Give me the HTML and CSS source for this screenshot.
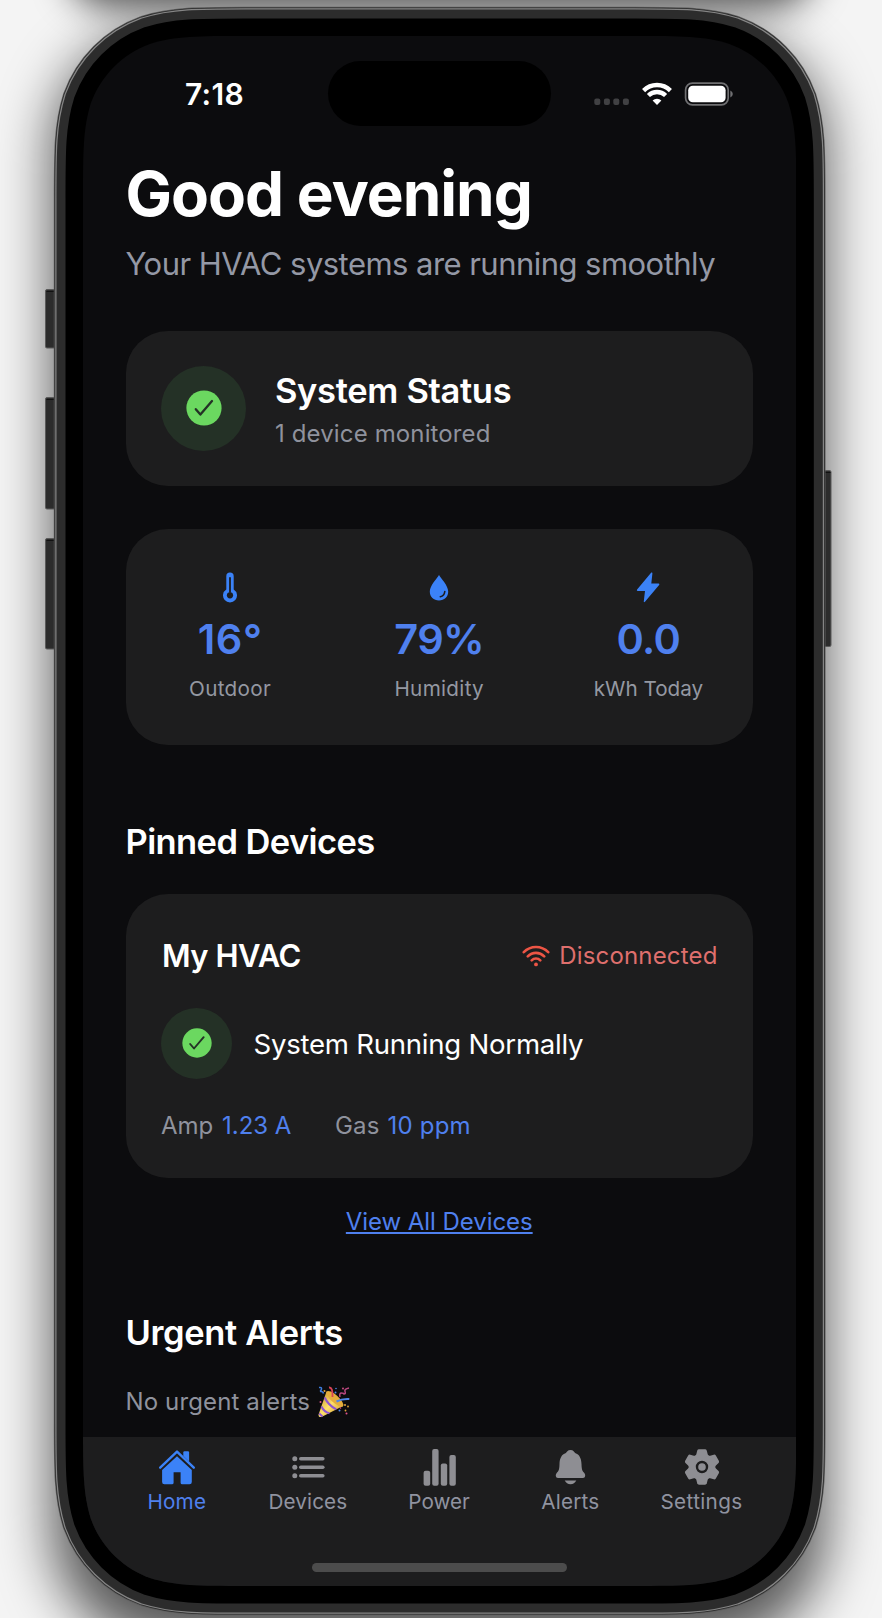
FILE: index.html
```html
<!DOCTYPE html>
<html lang="en">
<head>
<meta charset="utf-8">
<title>HVAC Home</title>
<link rel="stylesheet" href="styles.css">
</head>
<body>
<div class="stage">
  <div class="shadow"></div>
  <div class="shadow-top"></div>
  <svg class="frame" width="882" height="1618" viewBox="0 0 882 1618" aria-hidden="true">
    <defs>
      <path id="body" d="M162 0H551.3C597.9 0 621.2 0 646.4 7.9C673.8 17.9 695.4 39.5 705.4 66.9C713.3 92.1 713.3 115.4 713.3 162V1388C713.3 1434.6 713.3 1457.9 705.4 1483.1C695.4 1510.5 673.8 1532.1 646.4 1542.1C621.2 1550 597.9 1550 551.3 1550H162C115.4 1550 92.1 1550 66.9 1542.1C39.5 1532.1 17.9 1510.5 7.9 1483.1C0 1457.9 0 1434.6 0 1388V162C0 115.4 0 92.1 7.9 66.9C17.9 39.5 39.5 17.9 66.9 7.9C92.1 0 115.4 0 162 0Z"/>
    </defs>
    <g fill="#2c2c2c" stroke="#5a5a5a" stroke-width="1">
      <rect x="45.5" y="289.5" width="14" height="58.5" rx="1.5"/>
      <rect x="45.5" y="397.5" width="14" height="111.5" rx="1.5"/>
      <rect x="45.5" y="538.5" width="14" height="110.5" rx="1.5"/>
      <rect x="818" y="470.5" width="13" height="176" rx="1.5"/>
    </g>
    <path d="M46.500 291.500H54M46.500 399.500H54M46.500 540.500H54M824 472.500H830.500" stroke="#111" stroke-width="1.200"/>
    <g transform="translate(83 36)">
      <use href="#body" stroke="#5c5c5c" stroke-width="58.400"/>
      <use href="#body" stroke="#2a2a2a" stroke-width="57"/>
      <use href="#body" stroke="#858585" stroke-width="55.500"/>
      <use href="#body" stroke="#2c2c2c" stroke-width="53"/>
      <use href="#body" stroke="#000" stroke-width="35"/>
    </g>
  </svg>

  <div class="screen">
    <div class="status-bar">
      <div class="time">7:18</div>
      <div class="island"></div>
      <div class="indicators">
        <svg width="140" height="24" viewBox="0 0 140 24">
          <g fill="#414143"><rect x=".3" y="16.500" width="6" height="6.500" rx="2"/><rect x="9.900" y="16.500" width="6" height="6.500" rx="2"/><rect x="19.300" y="16.500" width="6" height="6.500" rx="2"/><rect x="28.900" y="16.500" width="6" height="6.500" rx="2"/></g>
          <g fill="none" stroke="#fff" stroke-width="4.400">
            <path d="M49.600 8.600A19 19 0 0 1 76.400 8.600"/>
            <path d="M54.400 13.500A12.300 12.300 0 0 1 71.600 13.500"/>
          </g>
          <path d="M63 23L58.600 18.500A6.400 6.400 0 0 1 67.400 18.500Z" fill="#fff"/>
          <rect x="91.600" y="1.200" width="42.600" height="21.600" rx="6.800" fill="none" stroke="#707072" stroke-width="1.700"/>
          <rect x="94.200" y="3.700" width="37.400" height="16.600" rx="4.600" fill="#fff"/>
          <path d="M136.300 8.500Q138.800 9.500 138.800 12T136.300 15.500Z" fill="#707072"/>
        </svg>
      </div>
    </div>

    <main class="content">
      <h1 class="greeting">Good evening</h1>
      <p class="subtitle">Your HVAC systems are running smoothly</p>

      <section class="card status-card">
        <div class="badge badge-large">
          <svg width="36" height="36" viewBox="0 0 36 36"><circle cx="18" cy="18" r="17.600" fill="#6bd860"/><path d="M9.800 19.200L14.400 24.600L26 11" fill="none" stroke="#243126" stroke-width="2.300" stroke-linecap="round" stroke-linejoin="round"/></svg>
        </div>
        <div class="status-text">
          <h2 class="heading status-title">System Status</h2>
          <p class="note monitored">1 device monitored</p>
        </div>
      </section>

      <section class="card metrics">
        <div class="metric">
          <svg width="30" height="31" viewBox="0 0 30 31"><path d="M11.300 4.200a3.700 3.700 0 0 1 7.400 0V17.500a7 7 0 1 1-7.400 0Z" fill="#3b82f7"/><path d="M15 6V20" stroke="#1d1d1e" stroke-width="1.800" stroke-linecap="round"/><circle cx="15" cy="23.300" r="3.100" fill="#1d1d1e"/></svg>
          <div class="value outdoor">16°</div>
          <div class="label outdoor-label">Outdoor</div>
        </div>
        <div class="metric">
          <svg width="30" height="31" viewBox="0 0 30 31"><path d="M15 3C17 6.500 24.200 13.500 24.200 19.600C24.200 25 20.300 28.500 15 28.500S5.800 25 5.800 19.600C5.800 13.500 13 6.500 15 3Z" fill="#3b82f7"/><path d="M20.800 19.500Q20.300 24 16.300 24.700" fill="none" stroke="#1d1d1e" stroke-width="1.600" stroke-linecap="round"/></svg>
          <div class="value humidity">79%</div>
          <div class="label humidity-label">Humidity</div>
        </div>
        <div class="metric">
          <svg width="30" height="31" viewBox="0 0 30 31"><path d="M18.300 .6Q19.500 0 19.400 1.400L18.300 11.500H25.600Q27 11.800 26.100 13.100L12 29.800Q10.600 31 10.800 29.200L12 18.900H4.600Q3.300 18.600 4.100 17.400Z" fill="#3b82f7"/></svg>
          <div class="value energy">0.0</div>
          <div class="label energy-label">kWh Today</div>
        </div>
      </section>

      <h2 class="heading section-title pinned">Pinned Devices</h2>

      <section class="card device">
        <div class="device-head">
          <h3 class="device-name">My HVAC</h3>
          <div class="connection">
            <svg width="28" height="22" viewBox="0 0 28 22" fill="none" stroke="#ed5545" stroke-width="2.600" stroke-linecap="round"><path d="M1.800 7.200A17 17 0 0 1 26.200 7.200M5.800 11.400A11.400 11.400 0 0 1 22.200 11.400M9.700 15.300A6 6 0 0 1 18.300 15.300"/><circle cx="14" cy="19.400" r="1.900" fill="#ed5545" stroke="none"/></svg>
            <span class="disconnected">Disconnected</span>
          </div>
        </div>
        <div class="device-state">
          <div class="badge badge-small">
            <svg width="30" height="30" viewBox="0 0 36 36"><circle cx="18" cy="18" r="17.600" fill="#6bd860"/><path d="M9.800 19.200L14.400 24.600L26 11" fill="none" stroke="#243126" stroke-width="2.300" stroke-linecap="round" stroke-linejoin="round"/></svg>
          </div>
          <span class="state-text">System Running Normally</span>
        </div>
        <div class="readings">
          <div class="reading amp"><span>Amp</span><span class="reading-value">1.23 A</span></div>
          <div class="reading gas"><span>Gas</span><span class="reading-value">10 ppm</span></div>
        </div>
      </section>

      <a class="view-all">View All Devices</a>

      <h2 class="heading section-title urgent">Urgent Alerts</h2>
      <div class="note empty">
        <span>No urgent alerts</span>
        <svg width="32" height="32" viewBox="0 0 32 32">
          <defs><linearGradient id="cone" x1="0" y1="0" x2="1" y2="1"><stop offset="0" stop-color="#b8862b"/><stop offset=".5" stop-color="#ffe06a"/><stop offset="1" stop-color="#c78d28"/></linearGradient></defs>
          <path d="M8.500 5.500L.6 28.500Q.3 31.600 3.500 31L25 20Q23 11 8.500 5.500Z" fill="url(#cone)"/>
          <ellipse cx="16.800" cy="12.800" rx="11" ry="3.800" transform="rotate(42 16.800 12.800)" fill="#e5ad3c"/>
          <path d="M6.700 11.500Q10 19 18.300 23.400M3.500 20.500Q6 26 11.500 27.300M1.200 27.500L4.500 30.500" fill="none" stroke="#8d55cf" stroke-width="2"/>
          <path d="M18.500 15.500Q24 12.500 31.300 13" fill="none" stroke="#4e86e8" stroke-width="2"/>
          <path d="M11 1.500Q15 1 14.500 11" fill="none" stroke="#d84355" stroke-width="1.800"/>
          <path d="M1 1.500Q4 1 3.500 3T2 5.500Q5 5 5.500 7.500" fill="none" stroke="#3e7cdc" stroke-width="1.500"/>
          <path d="M22 11Q21 7 23.500 7T26 8Q28 8 27 5.500T31 2" fill="none" stroke="#b8477f" stroke-width="1.500"/>
          <g fill="#e2a43b"><circle cx="6.500" cy="5" r="1"/><circle cx="27" cy="19" r="1"/><circle cx="30" cy="20.500" r=".9"/><circle cx="27.500" cy="24.500" r=".9"/></g>
          <g fill="#e0528c"><circle cx="2.500" cy="16" r="1"/><circle cx="25" cy="2.500" r=".9"/><circle cx="28.500" cy="27.500" r="1"/><circle cx="22.500" cy="22" r=".8"/></g>
          <g fill="#4e86e8"><circle cx="17.500" cy="6.500" r="1"/><circle cx="21.500" cy="24.500" r="1"/><circle cx="18" cy="2.500" r=".8"/></g>
        </svg>
      </div>
    </main>

    <nav class="tab-bar">
      <div class="tabs">
        <div class="tab active">
          <svg width="38" height="38" viewBox="0 0 38 38" fill="#3b82f7"><path d="M2.200 19.700L19 3.600L35.800 19.700" fill="none" stroke="#3b82f7" stroke-width="2.400" stroke-linecap="round" stroke-linejoin="round"/><path d="M25.300 8V4.500Q25.300 3.300 26.500 3.300H30Q31.100 3.300 31.100 4.500V13.500Z"/><path d="M19 8.300L33.800 22V34Q33.800 36.300 31.500 36.300H24.200Q22.600 36.300 22.600 34.800V24.300H15.600V34.800Q15.600 36.300 14 36.300H6.400Q4.100 36.300 4.100 34V22Z"/></svg>
          <span class="tab-home">Home</span>
        </div>
        <div class="tab">
          <svg width="38" height="38" viewBox="0 0 38 38" fill="#8e8e93"><circle cx="5.800" cy="10.700" r="2.500"/><circle cx="5.800" cy="19.200" r="2.500"/><circle cx="5.800" cy="27.700" r="2.500"/><rect x="10" y="8.900" width="25.600" height="3.700" rx="1.800"/><rect x="10" y="17.400" width="25.600" height="3.700" rx="1.800"/><rect x="10" y="25.900" width="25.600" height="3.700" rx="1.800"/></svg>
          <span class="tab-devices">Devices</span>
        </div>
        <div class="tab">
          <svg width="38" height="38" viewBox="0 0 38 38" fill="#8e8e93"><rect x="2.600" y="22.700" width="6.600" height="15" rx="2"/><rect x="11.200" y="1" width="6.400" height="36.700" rx="2"/><rect x="19.800" y="15.400" width="6.400" height="22.300" rx="2"/><rect x="28.400" y="7" width="6.400" height="30.700" rx="2"/></svg>
          <span class="tab-power">Power</span>
        </div>
        <div class="tab">
          <svg width="38" height="38" viewBox="0 0 38 38" fill="#8e8e93"><path d="M18.500 2C21.300 2 22.500 4 23.100 5.100C27.500 6.500 29.300 10.500 29.500 16C29.700 22.500 30.600 23.200 32.300 25C33.700 26.500 33.600 30 31 30H6C3.400 30 3.300 26.500 4.700 25C6.400 23.200 7.300 22.500 7.500 16C7.700 10.500 9.500 6.500 13.900 5.100C14.500 4 15.700 2 18.500 2Z"/><path d="M12.700 32.500H24.300Q22.500 36.200 18.500 36.200T12.700 32.500Z"/></svg>
          <span class="tab-alerts">Alerts</span>
        </div>
        <div class="tab">
          <svg width="38" height="38" viewBox="0 0 38 38"><g fill="#8e8e93"><circle cx="19" cy="19" r="13.400"/><path id="tooth" d="M12.600 9L14.200 2.700Q14.600 1.300 16 1.300H22Q23.400 1.300 23.800 2.700L25.400 9V29L23.800 35.300Q23.400 36.700 22 36.700H16Q14.600 36.700 14.200 35.300L12.600 29Z"/><use href="#tooth" transform="rotate(60 19 19)"/><use href="#tooth" transform="rotate(120 19 19)"/></g><circle cx="19" cy="19" r="5" fill="none" stroke="#1d1d1e" stroke-width="2.400"/></svg>
          <span class="tab-settings">Settings</span>
        </div>
      </div>
      <div class="home-indicator"></div>
    </nav>
  </div>
</div>
</body>
</html>
```
FILE: styles.css
```css
* { box-sizing: border-box; margin: 0; padding: 0; }

body {
  width: 882px;
  height: 1618px;
  overflow: hidden;
  background: #f1f1f1;
  font-family: Inter, "Liberation Sans", sans-serif;
  color: #fff;
}

svg { display: block; flex: none; }

.stage {
  position: relative;
  width: 882px;
  height: 1618px;
  padding: 36px 0 0 83px;
  overflow: hidden;
  background: #f4f4f4;
}

/* Drop shadow of the phone, and the one falling in from above the page */
.shadow {
  position: absolute;
  left: 52px;
  top: 30px;
  width: 774px;
  height: 1618px;
  border-radius: 120px;
  background: rgba(0, 0, 0, .64);
  filter: blur(27px);
}
.shadow-top {
  position: absolute;
  left: 68px;
  top: -92px;
  width: 746px;
  height: 98px;
  border-radius: 40px;
  background: rgba(0, 0, 0, .68);
  filter: blur(18px);
}

.frame { position: absolute; left: 0; top: 0; fill: none; }

.screen {
  position: relative;
  display: flex;
  flex-direction: column;
  width: 713.3px;
  height: 1550px;
  background: #0c0c0e;
  clip-path: path("M162 0H551.3C597.9 0 621.2 0 646.4 7.9C673.8 17.9 695.4 39.5 705.4 66.9C713.3 92.1 713.3 115.4 713.3 162V1388C713.3 1434.6 713.3 1457.9 705.4 1483.1C695.4 1510.5 673.8 1532.1 646.4 1542.1C621.2 1550 597.9 1550 551.3 1550H162C115.4 1550 92.1 1550 66.9 1542.1C39.5 1532.1 17.9 1510.5 7.9 1483.1C0 1457.9 0 1434.6 0 1388V162C0 115.4 0 92.1 7.9 66.9C17.9 39.5 39.5 17.9 66.9 7.9C92.1 0 115.4 0 162 0Z");
}

.status-bar {
  display: grid;
  grid-template-columns: 245.3px 222.500px 1fr;
  align-items: center;
  height: 90px;
  padding-top: 25px;
}
.time { padding: 0 0 0 102px; font-size: 30px; font-weight: 600; line-height: 36px; letter-spacing: .3px; }
.island { height: 65px; border-radius: 33px; background: #000; }
.indicators { padding-left: 43px; }

.content { flex: 1; padding: 30px 42.500px 0; }

.greeting { font-size: 62px; font-weight: 700; line-height: 76px; letter-spacing: -1px; white-space: nowrap; }
.subtitle { margin-top: 13px; font-size: 31px; line-height: 38px; letter-spacing: -.54px; color: #9498a5; white-space: nowrap; }

.card { width: 627.500px; border-radius: 42px; background: #1d1d1e; }

.status-card { display: flex; align-items: center; gap: 29px; height: 155.500px; margin-top: 47.500px; padding: 0 35.500px; }
.badge { display: flex; align-items: center; justify-content: center; flex: none; border-radius: 50%; background: #243126; }
.badge-large { width: 85px; height: 85px; }
.badge-small { width: 71px; height: 71px; }
.heading { font-size: 34.500px; font-weight: 600; line-height: 42px; letter-spacing: -.33px; }
.status-text { padding-top: 2.500px; }
.note { font-size: 24px; line-height: 30px; letter-spacing: .13px; color: #8f929d; }
.monitored { margin-top: 6.200px; }

.metrics { display: grid; grid-template-columns: repeat(3, 1fr); height: 216px; margin-top: 43px; padding-top: 43px; }
.metric { display: flex; flex-direction: column; align-items: center; }
.value { margin-top: 10px; font-size: 41.500px; font-weight: 600; line-height: 52px; letter-spacing: -.6px; color: #4f80ee; }
.outdoor { letter-spacing: .6px; }
.label { margin-top: 10.700px; font-size: 20.700px; line-height: 26px; color: #9498a2; }
.outdoor-label, .humidity-label { letter-spacing: .3px; }

.pinned { margin-top: 76.200px; letter-spacing: -.6px; }

.device { height: 283.500px; margin-top: 31.300px; padding: 42.200px 35.500px 0; }
.device-head { display: flex; align-items: center; justify-content: space-between; }
.device-name { padding-left: 1px; font-size: 31px; font-weight: 600; line-height: 38px; letter-spacing: -.5px; }
.connection { display: flex; align-items: center; gap: 9px; font-size: 24px; line-height: 30px; letter-spacing: .16px; color: #df6f6d; }
.device-state { display: flex; align-items: center; gap: 21.500px; margin-top: 33.300px; }
.state-text { padding-top: 1px; font-size: 27.600px; line-height: 34px; letter-spacing: -.26px; }
.readings { display: flex; gap: 43.500px; margin-top: 31.700px; font-size: 24px; line-height: 30px; color: #8f929d; }
.reading { display: flex; gap: 8.700px; }
.gas { gap: 8px; letter-spacing: .2px; }
.reading-value { color: #4f80ee; }

.view-all { display: block; width: 627.500px; margin-top: 28.900px; font-size: 24px; line-height: 30px; letter-spacing: -.06px; text-align: center; text-decoration: underline; text-decoration-thickness: 1.500px; text-underline-offset: 2px; color: #4f80ee; }

.urgent { margin-top: 75.300px; letter-spacing: -.36px; }
.empty { display: flex; align-items: center; gap: 8px; height: 30px; margin-top: 32.500px; }

.tab-bar { display: flex; flex-direction: column; align-items: center; height: 149px; background: #1d1d1e; }
.tabs { display: grid; grid-template-columns: repeat(5, 131.200px); padding-top: 11px; }
.tab { display: flex; flex-direction: column; align-items: center; gap: 2.600px; font-size: 20.700px; line-height: 26px; color: #9093a0; }
.tab span { padding-right: 1px; }
.tab-home, .tab-alerts { letter-spacing: .2px; }
.tab-devices { letter-spacing: .1px; }
.tab-settings { letter-spacing: .35px; }
.active { color: #4f80ee; }
.home-indicator { width: 255px; height: 9px; margin-top: 48.400px; border-radius: 5px; background: #4c4c4c; }
```
